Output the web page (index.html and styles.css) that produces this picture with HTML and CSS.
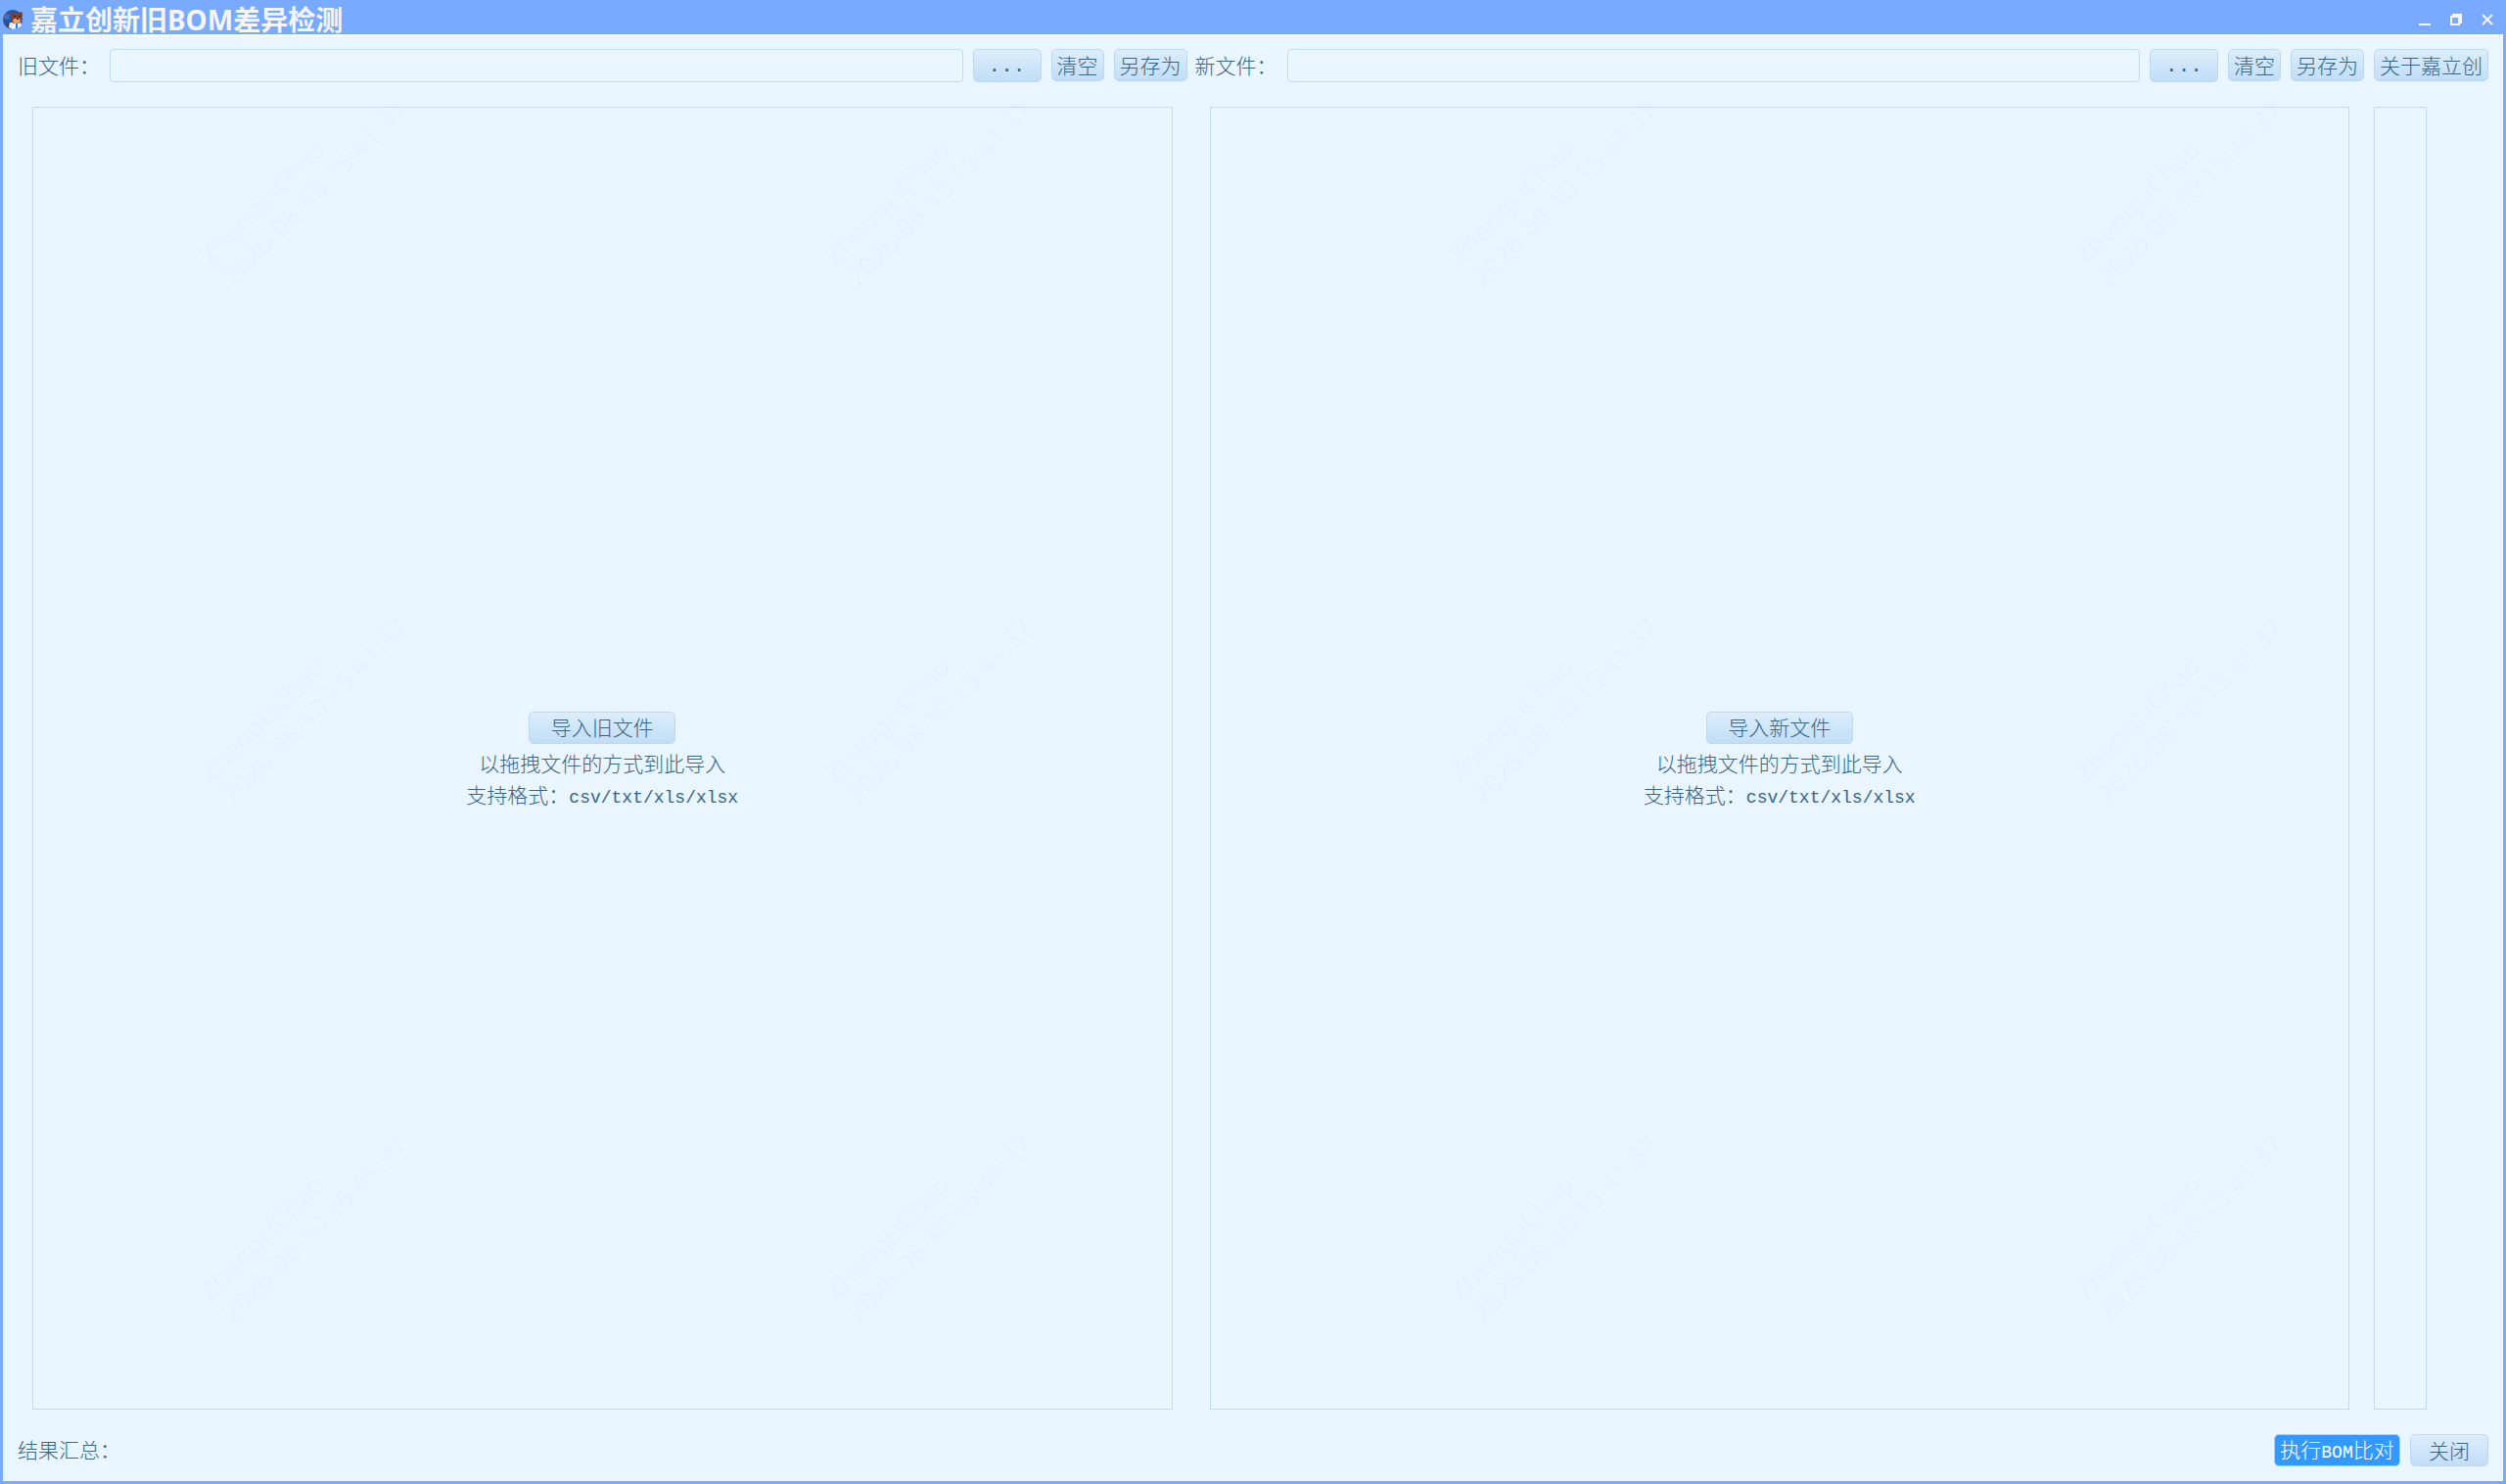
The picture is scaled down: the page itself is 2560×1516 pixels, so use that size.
FILE: index.html
```html
<!DOCTYPE html>
<html lang="zh-CN">
<head>
    <meta charset="UTF-8">
    <meta name="viewport" content="width=device-width, initial-scale=1.0">
    <title>嘉立创新旧BOM差异检测</title>
    <link rel="stylesheet" href="styles.css">
</head>
<body>
    <div class="window">
        <header class="titlebar">
            <svg class="logo" viewBox="0 0 20 20" aria-hidden="true">
                <circle cx="10" cy="10" r="10" fill="#1457b8"/>
                <path d="M4 13l4 3-1 3-4-3z" fill="#7a3524"/>
                <path d="M7 13h11l1 3-4 3-5 1-4-2z" fill="#eef4ff"/>
                <path d="M8 3l2-1 2 1h4l2-1 2 1v3l-1 2v4l-3 2h-5l-3-2V6z" fill="#8a3f25"/>
                <path d="M11 9h6l1 3-3 2h-3l-2-2z" fill="#e9a55f"/>
                <path d="M11 6h2v1h-2zM16 6h2v1h-2zM14 9h2v1h-2z" fill="#2d1a20"/>
                <path d="M13 14h2v5h-2z" fill="#2f7ae0"/>
                <circle cx="4" cy="7" r="3" fill="#2b73d8" stroke="#7d5a5c"/>
            </svg>
            <h1>嘉立创新旧BOM差异检测</h1>
            <div class="window-controls">
                <button type="button" aria-label="最小化">
                    <svg viewBox="0 0 12 12"><path d="M0 11h12" stroke="#f5f5f5" stroke-width="2"/></svg>
                </button>
                <button type="button" aria-label="还原">
                    <svg viewBox="0 0 12 12"><path d="M2 0h10v10h-2v2H0V2h2zM2 4v6h6V4z" fill="#f5f5f5" fill-rule="evenodd"/></svg>
                </button>
                <button type="button" aria-label="关闭窗口">
                    <svg viewBox="0 0 12 12"><path d="M1 1l10 10M11 1L1 11" stroke="#f5f5f5" stroke-width="2"/></svg>
                </button>
            </div>
        </header>

        <div class="toolbar">
            <div class="file-group">
                <label for="old-file">旧文件：</label>
                <input type="text" id="old-file">
                <button type="button" class="btn browse" aria-label="浏览旧文件">...</button>
                <button type="button" class="btn">清空</button>
                <button type="button" class="btn">另存为</button>
            </div>
            <div class="file-group">
                <label for="new-file">新文件：</label>
                <input type="text" id="new-file">
                <button type="button" class="btn browse" aria-label="浏览新文件">...</button>
                <button type="button" class="btn">清空</button>
                <button type="button" class="btn">另存为</button>
            </div>
            <button type="button" class="btn about">关于嘉立创</button>
        </div>

        <main class="panels">
            <section class="panel">
                <button type="button" class="btn import">导入旧文件</button>
                <p>以拖拽文件的方式到此导入</p>
                <p>支持格式：<span class="mono">csv/txt/xls/xlsx</span></p>
            </section>
            <section class="panel">
                <button type="button" class="btn import">导入新文件</button>
                <p>以拖拽文件的方式到此导入</p>
                <p>支持格式：<span class="mono">csv/txt/xls/xlsx</span></p>
            </section>
            <aside class="strip"></aside>
        </main>

        <footer class="footer">
            <span class="summary">结果汇总：</span>
            <button type="button" class="btn primary">执行<span class="mono">BOM</span>比对</button>
            <button type="button" class="btn close">关闭</button>
        </footer>

        <div class="watermarks" aria-hidden="true">
            <div class="cell"><p>ZhengLiChao<br>2026-08-10 15:41:37</p></div>
            <div class="cell"><p>ZhengLiChao<br>2026-08-10 15:41:37</p></div>
            <div class="cell"><p>ZhengLiChao<br>2026-08-10 15:41:37</p></div>
            <div class="cell"><p>ZhengLiChao<br>2026-08-10 15:41:37</p></div>
            <div class="cell"><p>ZhengLiChao<br>2026-08-10 15:41:37</p></div>
            <div class="cell"><p>ZhengLiChao<br>2026-08-10 15:41:37</p></div>
            <div class="cell"><p>ZhengLiChao<br>2026-08-10 15:41:37</p></div>
            <div class="cell"><p>ZhengLiChao<br>2026-08-10 15:41:37</p></div>
            <div class="cell"><p>ZhengLiChao<br>2026-08-10 15:41:37</p></div>
            <div class="cell"><p>ZhengLiChao<br>2026-08-10 15:41:37</p></div>
            <div class="cell"><p>ZhengLiChao<br>2026-08-10 15:41:37</p></div>
            <div class="cell"><p>ZhengLiChao<br>2026-08-10 15:41:37</p></div>
        </div>
    </div>
</body>
</html>
```
FILE: styles.css
```css
* {
    box-sizing: border-box;
}

body {
    margin: 0;
    background-color: #e9f6ff;
    color: #386488;
    font-family: "Noto Sans CJK SC", sans-serif;
    font-size: 21px;
    font-weight: 300;
}

h1, p {
    margin: 0;
}

button, input {
    font: inherit;
    color: inherit;
}

.window {
    position: relative;
    display: flex;
    flex-direction: column;
    min-height: 100vh;
    border: 3px solid #78aaff;
    border-top: none;
}

/* title bar */
.titlebar {
    display: flex;
    align-items: center;
    height: 37px;
    padding: 4px 10px 0 0;
    overflow: hidden;
    background-color: #78aaff;
    border-bottom: 2px solid #fff;
}

.logo {
    width: 20px;
    height: 20px;
}

.titlebar h1 {
    flex: 1;
    margin-left: 8px;
    color: #f5f5f5;
    font-family: "Noto Sans", "Noto Sans CJK SC", sans-serif;
    font-size: 28px;
    font-weight: 700;
    line-height: 34px;
}

.window-controls {
    display: flex;
    gap: 20px;
}

.window-controls button {
    width: 12px;
    height: 12px;
    padding: 0;
    border: none;
    background: none;
    cursor: pointer;
}

.window-controls svg {
    display: block;
    width: 12px;
    height: 12px;
}

/* file pickers */
.toolbar {
    display: flex;
    gap: 10px;
    padding: 13px 15px 25px;
}

.file-group {
    display: flex;
    flex: 1;
    gap: 10px;
}

.file-group + .file-group {
    margin-left: -2px;
}

.file-group label {
    width: 84px;
    line-height: 32px;
    white-space: nowrap;
}

.file-group input {
    flex: 1;
    min-width: 0;
    height: 34px;
    padding: 0 6px;
    border: 1px solid #bfdcf5;
    border-radius: 4px;
    background: transparent;
}

.btn {
    height: 33px;
    padding: 0 5px 2px;
    border: 1px solid #bcd9f3;
    border-radius: 5px;
    background: linear-gradient(#dceefd, #c1ddf6);
    line-height: 28px;
    white-space: nowrap;
    cursor: pointer;
}

.btn.browse {
    width: 70px;
    height: 34px;
    padding: 2px 5px 0;
    font-family: "Liberation Mono", monospace;
}

.btn.about {
    width: 117px;
}

.mono {
    font-family: "Liberation Mono", monospace;
    font-size: 18px;
}

/* drop areas */
.panels {
    display: flex;
    flex: 1;
    padding: 0 78px 0 30px;
}

.panel {
    display: flex;
    flex: 1;
    flex-direction: column;
    align-items: center;
    justify-content: center;
    padding-top: 8px;
    border: 1px solid #bfdcf5;
    line-height: 32px;
}

.panel + .panel {
    margin-left: 38px;
}

.btn.import {
    width: 150px;
    margin-bottom: 3px;
}

.strip {
    width: 54px;
    margin-left: 25px;
    border: 1px solid #bfdcf5;
}

/* result bar */
.footer {
    display: flex;
    align-items: center;
    gap: 10px;
    padding: 25px 15px 15px;
}

.summary {
    flex: 1;
    padding-bottom: 3px;
    line-height: 30px;
}

.btn.primary {
    width: 129px;
    border-color: #a9d4fb;
    background: #3399ff;
    color: #fff;
}

.btn.close {
    width: 80px;
}

/* faint repeated user stamp over the whole window */
.watermarks {
    position: absolute;
    inset: 0;
    display: grid;
    grid-template-columns: repeat(4, 1fr);
    grid-auto-rows: 529px;
    overflow: hidden;
    pointer-events: none;
    color: rgba(60, 90, 120, 0.03);
    font-family: "Noto Sans", sans-serif;
    font-size: 27px;
    font-weight: 400;
    line-height: 32px;
    white-space: nowrap;
}

.cell {
    padding: 154px 0 0 179px;
}

.cell p {
    width: 255px;
    transform: rotate(-45deg);
}
```
